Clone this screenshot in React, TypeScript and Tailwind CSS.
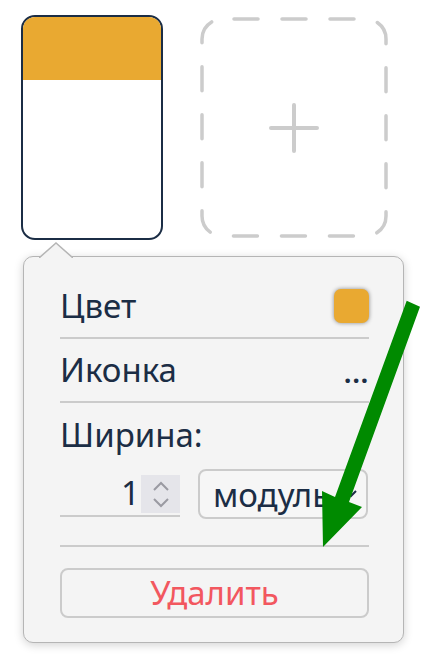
import React from 'react';

const INK = 'text-[#1b2d45]';

// ─── top row ────────────────────────────────────────────────────────────────

const ModuleCard: React.FC = () => (
  <div className="w-[142px] h-[225px] rounded-[14px] border-2 border-[#1b2d45] bg-white overflow-hidden flex flex-col">
    <div className="h-[63px] bg-[#e9a931]" />
  </div>
);

const AddSlot: React.FC = () => (
  <button className="mt-[2px] w-[188px] h-[221px] flex items-center justify-center relative">
    <svg width="188" height="221" viewBox="0 0 188 221" className="absolute inset-0">
      <rect
        x="2"
        y="2"
        width="184"
        height="217"
        rx="20"
        fill="none"
        stroke="#cccccc"
        strokeWidth="3.5"
        strokeLinecap="round"
        strokeDasharray="24 24"
        strokeDashoffset="-12"
      />
    </svg>
    <svg width="50" height="50" viewBox="0 0 50 50" className="relative">
      <path d="M25 2v46M2 25h46" stroke="#cccccc" strokeWidth="4" strokeLinecap="round" />
    </svg>
  </button>
);

// ─── popover ────────────────────────────────────────────────────────────────

const Divider: React.FC = () => <div className="h-[2px] bg-[#cbcbcb]" />;

const NumberField: React.FC = () => (
  <div className="w-[120px] h-[48px] flex items-end justify-end border-b-2 border-[#cbcbcb] pb-[2px]">
    <span className={`text-[33px] leading-none mb-[4px] mr-[1px] ${INK}`}>1</span>
    <div className="w-[39px] h-[38px] bg-[#e5e5ea] flex flex-col items-center justify-center gap-[5px]">
      <svg width="18" height="11" viewBox="0 0 18 11">
        <path d="M2 9l7-7 7 7" fill="none" stroke="#9a9aa2" strokeWidth="2" />
      </svg>
      <svg width="18" height="11" viewBox="0 0 18 11">
        <path d="M2 2l7 7 7-7" fill="none" stroke="#9a9aa2" strokeWidth="2" />
      </svg>
    </div>
  </div>
);

const UnitSelect: React.FC = () => (
  <div className="w-[170px] h-[50px] rounded-[8px] border-2 border-[#cbcbcb] bg-[#f6f6f6] flex items-center pl-[13px] pr-[8px]">
    <span className={`flex-1 text-[33px] leading-none ${INK}`}>модуль</span>
    <svg width="14" height="10" viewBox="0 0 14 10">
      <path d="M2 2l5 5 5-5" fill="none" stroke="#1b2d45" strokeWidth="2" />
    </svg>
  </div>
);

const Popover: React.FC = () => (
  <div className="relative ml-[2px] mt-[16px] w-[381px] rounded-[10px] border-[1.5px] border-[#b5b5b5] bg-[#f4f4f4] shadow-[0_2px_10px_rgba(0,0,0,0.18)] pt-[18px] pb-[24px] pl-[36px] pr-[34px]">
    {/* notch */}
    <svg width="34" height="16" viewBox="0 0 34 16" className="absolute left-[15px] -top-[15px]">
      <path d="M0 16L17 1l17 15" fill="#f4f4f4" stroke="#b5b5b5" strokeWidth="1.5" />
    </svg>

    <div className="h-[62px] flex items-center justify-between">
      <span className={`text-[33px] ${INK}`}>Цвет</span>
      <div className="w-[35px] h-[34px] rounded-[7px] bg-[#e9a931] shadow-[0_0_4px_rgba(0,0,0,0.45)]" />
    </div>
    <Divider />

    <div className="h-[62px] flex items-center justify-between">
      <span className={`text-[33px] ${INK}`}>Иконка</span>
      <span className={`text-[26px] font-bold tracking-[1px] self-end mb-[15px] leading-none ${INK}`}>...</span>
    </div>
    <Divider />

    <div className={`mt-[12px] h-[40px] flex items-center text-[33px] ${INK}`}>Ширина:</div>

    <div className="mt-[14px] flex items-start gap-[18px]">
      <NumberField />
      <UnitSelect />
    </div>

    <div className="mt-[26px]">
      <Divider />
    </div>

    <button className="mt-[21px] w-full h-[50px] rounded-[8px] border-2 border-[#cbcbcb] bg-[#f4f4f4] text-[33px] text-[#f2575f] flex items-center justify-center">
      Удалить
    </button>
  </div>
);

// ─── annotation arrow ───────────────────────────────────────────────────────

const GreenArrow: React.FC = () => (
  <svg width="423" height="667" viewBox="0 0 423 667" className="absolute left-0 top-0 pointer-events-none">
    <polygon
      points="406.7,300.7 420,306.7 349,502 362,507 323,547 322,491 335,497"
      fill="#008a00"
    />
  </svg>
);

export default function App() {
  return (
    <div className="relative w-[423px] h-[667px] bg-white overflow-hidden" style={{ fontFamily: '"Noto Sans", "DejaVu Sans", sans-serif' }}>
      <div className="pt-[15px] pl-[21px]">
        <div className="flex items-start gap-[37px]">
          <ModuleCard />
          <AddSlot />
        </div>
        <Popover />
      </div>
      <GreenArrow />
    </div>
  );
}
